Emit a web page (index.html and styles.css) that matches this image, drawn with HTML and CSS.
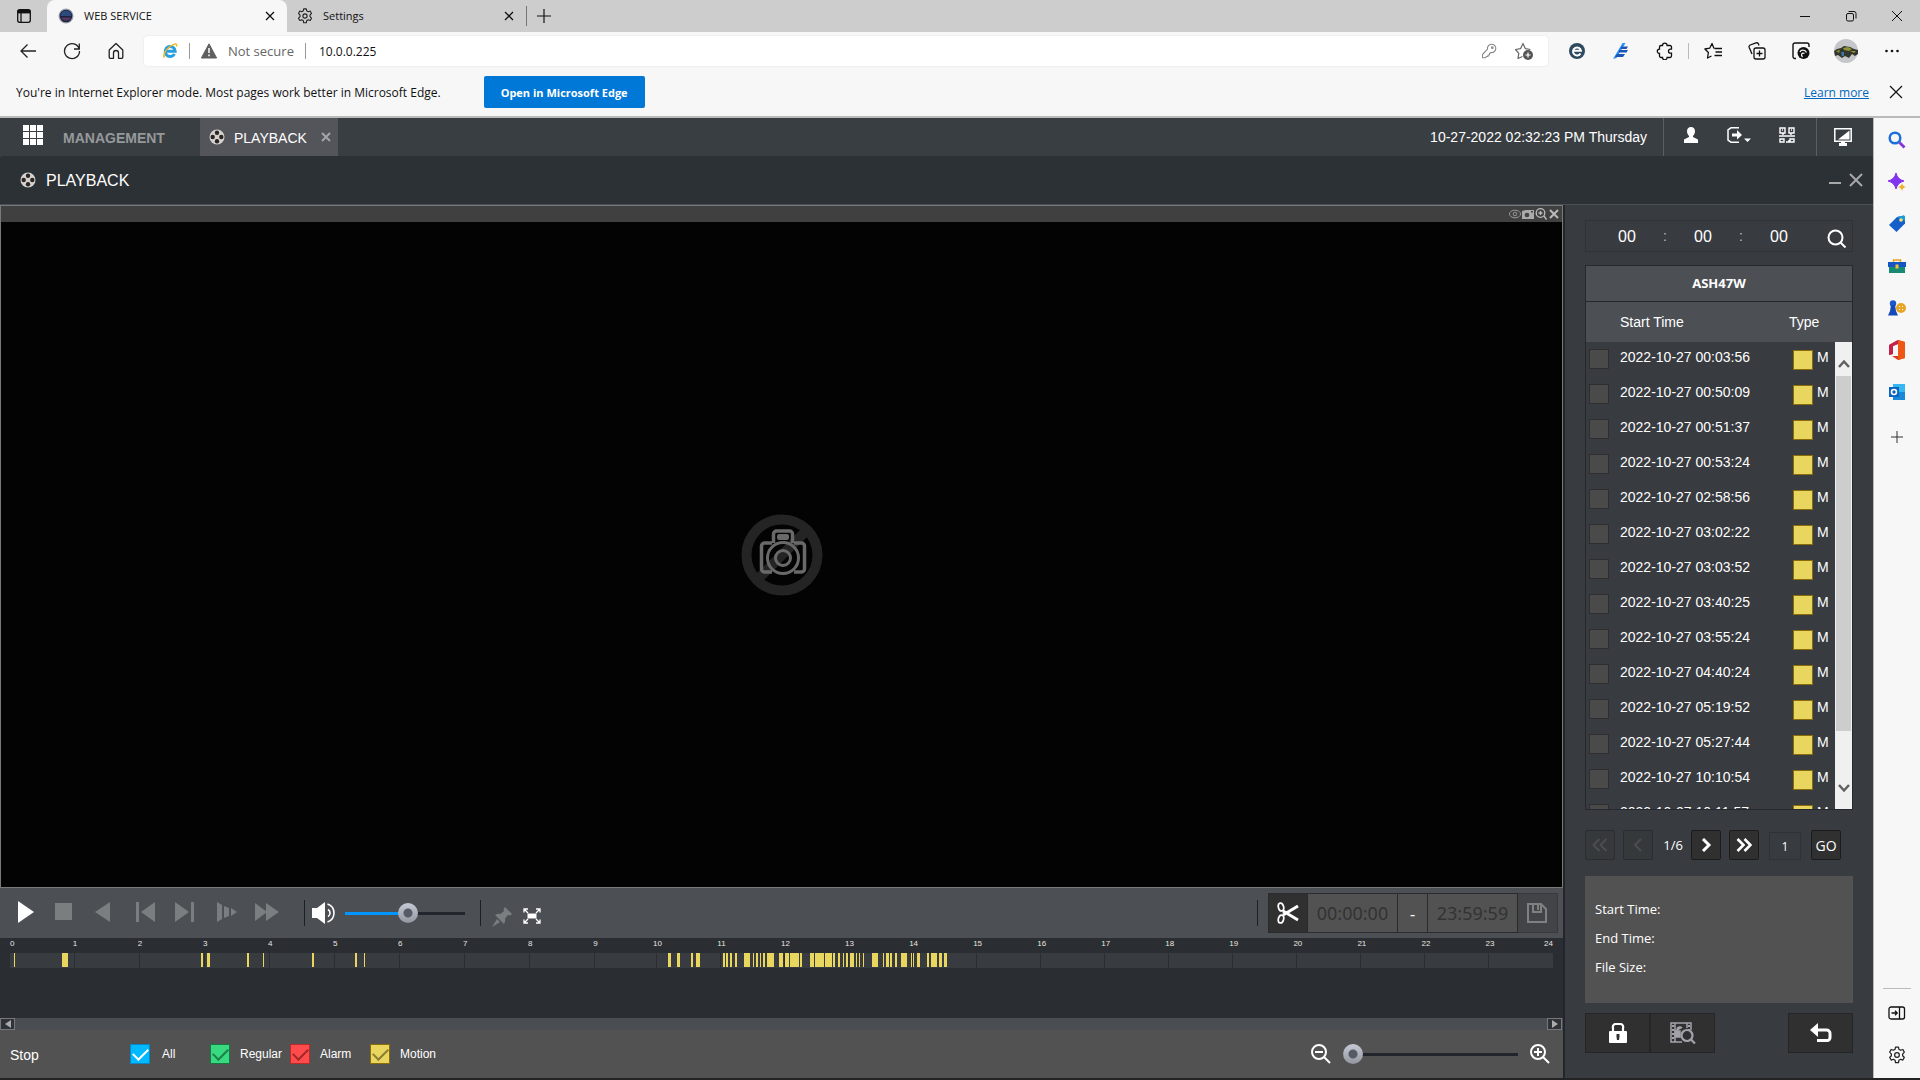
FILE: index.html
```html
<!DOCTYPE html>
<html lang="en">
<head>
<meta charset="utf-8">
<title>WEB SERVICE</title>
<link rel="stylesheet" href="styles.css">
</head>
<body>
<header class="browser">
  <div class="tabstrip">
    <button class="ic tab-actions" aria-label="Tab actions"><svg width="16" height="16" viewBox="0 0 16 16" fill="none" stroke="#111" stroke-width="1.3"><rect x="1.7" y="1.7" width="12.6" height="12.6" rx="2"/><path d="M1.7 3.7h12.6" stroke-width="3.4"/><path d="M5 5v9"/></svg></button>
    <div class="tab tab-active">
      <svg width="16" height="16" viewBox="0 0 16 16"><circle cx="8" cy="8" r="7.5" fill="#9aa0ae"/><circle cx="8" cy="8" r="6.3" fill="#1c2340"/><path d="M2.5 8a5.5 5.5 0 0 1 11 0z" fill="#2c4b7c"/><path d="M3 9.5h10a5.5 5.5 0 0 1-10 0z" fill="#57365f"/></svg>
      <span class="tab-title">WEB SERVICE</span>
      <button class="ic close" aria-label="Close tab"><svg width="10" height="10" viewBox="0 0 10 10" stroke="#111" stroke-width="1.3"><path d="M1 1l8 8M9 1l-8 8"/></svg></button>
    </div>
    <div class="tab">
      <svg width="16" height="16" viewBox="0 0 16 16" fill="none" stroke="#222" stroke-width="1.1"><circle cx="8" cy="8" r="2.1"/><path d="M6.7.9h2.6l.4 2 1.5.9 2-.7 1.3 2.3-1.5 1.8v1.5l1.5 1.5-1.3 2.3-2-.7-1.5.9-.4 2.1H6.7l-.4-2.1-1.5-.9-2 .7-1.3-2.3L3 8.7V7.2L1.5 5.4l1.3-2.3 2 .7 1.5-.9z" stroke-linejoin="round"/></svg>
      <span class="tab-title">Settings</span>
      <button class="ic close" aria-label="Close tab"><svg width="10" height="10" viewBox="0 0 10 10" stroke="#111" stroke-width="1.3"><path d="M1 1l8 8M9 1l-8 8"/></svg></button>
    </div>
    <span class="vline tall"></span>
    <button class="ic newtab" aria-label="New tab"><svg width="16" height="16" viewBox="0 0 16 16" stroke="#111" stroke-width="1.2"><path d="M8 1v14M1 8h14"/></svg></button>
    <div class="winbtns">
      <button class="ic" aria-label="Minimize"><svg width="12" height="12" viewBox="0 0 12 12" stroke="#111"><path d="M1 6.500h10"/></svg></button>
      <button class="ic" aria-label="Restore"><svg width="12" height="12" viewBox="0 0 12 12" fill="none" stroke="#111"><rect x="1.500" y="3.500" width="7" height="7.500" rx="1.500"/><path d="M3.500 1.500h5.500a2 2 0 0 1 2 2v5"/></svg></button>
      <button class="ic" aria-label="Close"><svg width="12" height="12" viewBox="0 0 12 12" stroke="#111"><path d="M1 1l10 10M11 1L1 11"/></svg></button>
    </div>
  </div>

  <div class="toolbar">
    <div class="nav">
      <button class="ic" aria-label="Back"><svg width="18" height="18" viewBox="0 0 18 18" fill="none" stroke="#222" stroke-width="1.300"><path d="M17 9H2M8.500 2.500L2 9l6.500 6.500"/></svg></button>
      <button class="ic" aria-label="Refresh"><svg width="18" height="18" viewBox="0 0 18 18" fill="none" stroke="#222" stroke-width="1.300"><path d="M16.200 7A7.500 7.500 0 1 0 16.500 9M16.300 1.500V7H11"/></svg></button>
      <button class="ic" aria-label="Home"><svg width="18" height="18" viewBox="0 0 18 18" fill="none" stroke="#222" stroke-width="1.300"><path d="M2.200 8L9 1.500 15.800 8v7.300a1 1 0 0 1-1 1h-3.300V11a2.500 2.500 0 0 0-5 0v5.300H3.200a1 1 0 0 1-1-1z" stroke-linejoin="round"/></svg></button>
    </div>
    <div class="address">
      <svg width="16" height="16" viewBox="0 0 16 16" fill="none"><path d="M12.500 11A5 5 0 1 1 13.200 8.300H4.500" stroke="#2a9fe0" stroke-width="3"/><path d="M2.500 14.500C.5 13 3 7 8 3.500s7.500-3 6.500 0" stroke="#f2b91d" stroke-width="1.500"/></svg>
      <span class="vline"></span>
      <svg width="16" height="16" viewBox="0 0 16 16"><path d="M8 .8L15.600 15H.4z" fill="#5f5f5f" stroke="#5f5f5f" stroke-linejoin="round"/><path d="M8 5v5M8 11.500v1.800" stroke="#fff" stroke-width="1.500"/></svg>
      <span class="notsecure">Not secure</span>
      <span class="vline"></span>
      <input class="url" type="text" value="10.0.0.225" aria-label="Address">
      <button class="ic" aria-label="Saved password"><svg width="16" height="16" viewBox="0 0 16 16" fill="none" stroke="#888" stroke-width="1.100"><path d="M6.500 6.200A4.200 4.200 0 1 1 9.800 9.500L8.500 10.500V12H7v1.500H5.500L4.500 14.800H1.500V11.500z" stroke-linejoin="round"/><circle cx="11.300" cy="4.700" r=".8"/></svg></button>
      <button class="ic" aria-label="Add to favorites"><svg width="20" height="20" viewBox="0 0 20 20" fill="none" stroke="#666" stroke-width="1.200"><path d="M8.500 15.500L4 17.500l.8-5.200L1.500 8.500l5-.8L9 2.500l2.400 5.200 5 .8" stroke-linejoin="round"/><circle cx="14" cy="14" r="5" fill="#555" stroke="none"/><path d="M14 11.500v5M11.500 14h5" stroke="#fff"/></svg></button>
    </div>
    <div class="exts">
      <button class="ic" aria-label="Extension e"><svg width="18" height="18" viewBox="0 0 18 18" fill="none"><circle cx="9" cy="9" r="8" fill="#2d4a5e"/><path d="M12.500 11.500A4 4 0 1 1 13 8.800H6" stroke="#fff" stroke-width="2"/></svg></button>
      <button class="ic" aria-label="Extension stripes"><svg width="18" height="18" viewBox="0 0 18 18"><path d="M10.500 1h3L4.500 16l-3.500 1z" fill="#2a8ff0"/><path d="M9.500 4.500H16L14.500 7H8.500zM7.500 8H16l-1.500 2.500H6.500zM5 12h8l-2 3H3z" fill="#1b55b8"/></svg></button>
      <button class="ic" aria-label="Extensions"><svg width="18" height="18" viewBox="0 0 18 18" fill="none" stroke="#111" stroke-width="1.300"><path d="M6.500 3.500a2.300 2.300 0 0 1 4.600 0H14a1.500 1.500 0 0 1 1.500 1.500v2.200h-1a2 2 0 0 0 0 4h1V14a1.500 1.500 0 0 1-1.500 1.500h-2.900a2.300 2.300 0 0 1-4.600 0H5A1.500 1.500 0 0 1 3.500 14v-2.500a2.200 2.200 0 0 1 0-4.400V5A1.500 1.500 0 0 1 5 3.500z"/></svg></button>
      <span class="vline"></span>
      <button class="ic" aria-label="Favorites"><svg width="18" height="18" viewBox="0 0 18 18" fill="none" stroke="#111" stroke-width="1.300"><path d="M10 6.500L8 1.500 5.700 6.200.9 7l3.500 3.500L3.500 16l4-2M10.500 6.500H18M11.500 10H18M10.500 13.500H18" stroke-linejoin="round"/></svg></button>
      <button class="ic" aria-label="Collections"><svg width="18" height="18" viewBox="0 0 18 18" fill="none" stroke="#111" stroke-width="1.300"><rect x="6" y="6" width="11" height="11" rx="2"/><path d="M11.500 8.500v6M8.500 11.500h6M4 12L1.200 5.500a2 2 0 0 1 1-2.500L8 .9a2 2 0 0 1 2.500 1.200L11 3.500"/></svg></button>
      <button class="ic" aria-label="IE mode"><svg width="18" height="18" viewBox="0 0 18 18" fill="none" stroke="#111" stroke-width="1.400"><path d="M4 16.500H3a2 2 0 0 1-2-2V3a2 2 0 0 1 2-2h12a2 2 0 0 1 2 2v2"/><circle cx="11.500" cy="11" r="6" fill="#111" stroke="none"/><path d="M8 10c1-2.500 5-2.500 6.500.5M12.500 11.500c-2.500-1.500-4 1-2 3.500" stroke="#f7f7f7" stroke-width="1.300"/></svg></button>
      <button class="ic wide" aria-label="Profile"><svg width="24" height="24" viewBox="0 0 24 24"><circle cx="12" cy="12" r="12" fill="#c5c6ca"/><path d="M0 12l3-2 4-1 3-2 6 1 4 2 4 1v4l-3 2-3-2-3 4-4-2-3 2-4-3-3 1z" fill="#33372b"/><path d="M9 9l5-1 4 2-3 2-5-1zM16 12l6 0-2 2zM2 12l4-1-1 3z" fill="#8f9236"/><path d="M7 13h3v4H8z" fill="#3c77a8"/></svg></button>
      <button class="ic wide" aria-label="More"><svg width="16" height="16" viewBox="0 0 16 16" fill="#111"><circle cx="2.500" cy="8" r="1.300"/><circle cx="8" cy="8" r="1.300"/><circle cx="13.500" cy="8" r="1.300"/></svg></button>
    </div>
  </div>

  <div class="banner">
    <span>You're in Internet Explorer mode. Most pages work better in Microsoft Edge.</span>
    <button class="open-edge">Open in Microsoft Edge</button>
    <a class="learn" href="#">Learn more</a>
    <button class="ic" aria-label="Dismiss"><svg width="14" height="14" viewBox="0 0 14 14" stroke="#111" stroke-width="1.200"><path d="M1 1l12 12M13 1L1 13"/></svg></button>
  </div>
</header>

<div class="main">
<div class="app">
  <nav class="appnav">
    <svg class="grid-icon" width="20" height="20" viewBox="0 0 20 20" fill="#fff"><path d="M0 0h6v6H0zM7 0h6v6H7zM14 0h6v6h-6zM0 7h6v6H0zM7 7h6v6H7zM14 7h6v6h-6zM0 14h6v6H0zM7 14h6v6H7zM14 14h6v6h-6z"/></svg>
    <a class="management" href="#">MANAGEMENT</a>
    <div class="apptab">
      <svg width="16" height="16" viewBox="0 0 16 16"><circle cx="8" cy="8" r="7.500" fill="#d4d2cf"/><g fill="#2b2420"><circle cx="8" cy="3.700" r="2.200"/><circle cx="8" cy="12.300" r="2.200"/><circle cx="3.700" cy="8" r="2.200"/><circle cx="12.300" cy="8" r="2.200"/></g></svg>
      <a href="#">PLAYBACK</a>
      <button class="ic" aria-label="Close playback"><svg width="10" height="10" viewBox="0 0 10 10" stroke="#a3a4a8" stroke-width="2"><path d="M1 1l8 8M9 1l-8 8"/></svg></button>
    </div>
    <time class="clock">10-27-2022 02:32:23 PM Thursday</time>
    <div class="navicons">
      <button class="ic" aria-label="User"><svg width="16" height="16" viewBox="0 0 16 16" fill="#fff"><path d="M8 0c2.500 0 4 1.800 4 4.300C12 6.500 11 8 10 9v1l5 2.500V16H1v-3.500L6 10V9C5 8 4 6.500 4 4.300 4 1.800 5.500 0 8 0z"/></svg></button>
      <button class="ic" aria-label="Logout"><svg width="24" height="16" viewBox="0 0 24 16" fill="none"><path d="M12 .8H4L1 3v10l3 2.200h8" stroke="#fff" stroke-width="1.500"/><path d="M5 6.500h5V3l5 5-5 4.500v-3H5zM17 11.500h7l-3.500 3.500z" fill="#fff"/></svg></button>
      <button class="ic" aria-label="QR code"><svg width="16" height="16" viewBox="0 0 16 16" fill="none" stroke="#fff" stroke-width="1.400"><path d="M1 1h5v5H1zM10 1h5v5h-5zM0 9h16M1 12h4v3H1zM11 12h4v3h-4zM7 15h3v-2M3 3h1M12 3h1M4 6v2M12 6v2"/></svg></button>
    </div>
    <button class="ic screen" aria-label="Display"><svg width="18" height="18" viewBox="0 0 18 18"><path d="M.8.8h16.400v12.400H.8z" fill="none" stroke="#fff" stroke-width="1.500"/><path d="M15.500 2.500v9H4zM7 13h4v2h2v3H5v-3h2z" fill="#fff"/></svg></button>
  </nav>

  <div class="titlebar">
    <svg width="16" height="16" viewBox="0 0 16 16"><circle cx="8" cy="8" r="7.500" fill="#d4d2cf"/><g fill="#2b2420"><circle cx="8" cy="3.700" r="2.200"/><circle cx="8" cy="12.300" r="2.200"/><circle cx="3.700" cy="8" r="2.200"/><circle cx="12.300" cy="8" r="2.200"/></g></svg>
    <h1>PLAYBACK</h1>
    <button class="ic" aria-label="Minimize panel"><svg width="12" height="12" viewBox="0 0 12 12" stroke="#a6a8aa" stroke-width="2"><path d="M0 9h12"/></svg></button>
    <button class="ic" aria-label="Close panel"><svg width="14" height="14" viewBox="0 0 14 14" stroke="#a6a8aa" stroke-width="2"><path d="M1 1l12 12M13 1L1 13"/></svg></button>
  </div>

  <div class="workspace">
    <section class="player">
      <div class="video">
        <div class="videobar">
          <button class="ic" aria-label="Fish eye"><svg width="12" height="12" viewBox="0 0 12 12" fill="none" stroke="#999"><ellipse cx="6" cy="6" rx="5.500" ry="3.800"/><circle cx="6" cy="6" r="1.800"/></svg></button>
          <button class="ic" aria-label="Snapshot"><svg width="12" height="12" viewBox="0 0 12 12"><path d="M0 3l4-1h8v9H0z" fill="#aaa"/><circle cx="5" cy="7" r="2.300" fill="#444"/><path d="M9 3h2v1.500H9z" fill="#444"/></svg></button>
          <button class="ic" aria-label="Digital zoom"><svg width="12" height="12" viewBox="0 0 12 12" fill="none" stroke="#bbb" stroke-width="1.300"><circle cx="5.500" cy="5" r="4.300"/><path d="M5.500 3v4M3.500 5h4M9 8l2.500 3.500"/></svg></button>
          <button class="ic" aria-label="Close video"><svg width="12" height="12" viewBox="0 0 12 12" stroke="#bbb" stroke-width="2"><path d="M2 2l8 8M10 2l-8 8"/></svg></button>
        </div>
        <div class="screen-area">
          <svg width="82" height="82" viewBox="0 0 82 82" fill="none"><circle cx="41" cy="41" r="35.500" stroke="#242424" stroke-width="10"/><path d="M17 65L65 17" stroke="#242424" stroke-width="10"/><g stroke="#696969" stroke-width="3"><path d="M31 29h-7.500a3 3 0 0 0-3 3v23a3 3 0 0 0 3 3h7.500M53 58h7.500a3 3 0 0 0 3-3V32a3 3 0 0 0-3-3H53M32.500 29V20a3 3 0 0 1 3-3h13a3 3 0 0 1 3 3v9" stroke-width="3.500"/><rect x="36" y="20" width="12" height="6" rx="2" fill="#696969" stroke="none"/><circle cx="42" cy="44" r="15.500"/><circle cx="42" cy="44" r="7.500"/></g></svg>
        </div>
      </div>

      <div class="controls">
        <button class="ic" aria-label="Play"><svg width="22" height="22" viewBox="0 0 22 22" fill="#fff"><path d="M3 0l16 11L3 22z"/></svg></button>
        <button class="ic" aria-label="Stop"><svg width="22" height="22" viewBox="0 0 22 22" fill="#7b7e81"><path d="M0 2h17v17H0z"/></svg></button>
        <button class="ic" aria-label="Play backward"><svg width="22" height="22" viewBox="0 0 22 22" fill="#7b7e81"><path d="M15 1v20L0 11z"/></svg></button>
        <button class="ic" aria-label="Previous frame"><svg width="22" height="22" viewBox="0 0 22 22" fill="#7b7e81"><path d="M1 1h3v20H1zM20 1v20L6 11z"/></svg></button>
        <button class="ic" aria-label="Next frame"><svg width="22" height="22" viewBox="0 0 22 22" fill="#7b7e81"><path d="M16 1h3v20h-3zM0 1v20l14-10z"/></svg></button>
        <button class="ic" aria-label="Slow"><svg width="22" height="22" viewBox="0 0 22 22" fill="#7b7e81"><path d="M2 1l5 3v14l-5 3zM9 5l5 2v8l-5 2zM16 7l6 4-6 4z"/></svg></button>
        <button class="ic" aria-label="Fast"><svg width="24" height="22" viewBox="0 0 24 22" fill="#7b7e81"><path d="M0 2l12 9-12 9zM11 2l13 9-13 9z"/></svg></button>
        <span class="sep first-sep"></span>
        <button class="ic" aria-label="Volume"><svg width="24" height="22" viewBox="0 0 24 22" fill="none"><path d="M0 6h5l8-6v22l-8-6H0z" fill="#fff"/><path d="M16 7.500a4 4 0 0 1 0 7M15.500 2a9.500 9.500 0 0 1 0 18" stroke="#fff" stroke-width="1.600"/></svg></button>
        <input class="slider volume" type="range" min="0" max="100" value="53" aria-label="Volume level">
        <span class="sep"></span>
        <button class="ic pin" aria-label="Pin"><svg width="20" height="20" viewBox="0 0 20 20" fill="#7b7e81"><path d="M13 0l7 7-2 1.500-2-.5-3 3.500c.5 2 0 4-1 5.500L3 8c2-1 4-1.500 5.500-1L12 4l-.5-2zM5 12l3 3-8 5z"/></svg></button>
        <button class="ic pin" aria-label="Full screen"><svg width="18" height="16" viewBox="0 0 18 16" fill="none" stroke="#fff" stroke-width="1.300"><path d="M4.500 5.500h9v5h-9z" fill="#fff" stroke="none"/><path d="M1 4.500V1h4M13 1h4v3.500M17 11.500V15h-4M5 15H1v-3.500M1 1l4 4M17 1l-4 4M17 15l-4-4M1 15l4-4"/></svg></button>
        <span class="sep clipsep"></span>
        <div class="clip">
          <button class="clip-btn dark" aria-label="Cut"><svg width="22" height="22" viewBox="0 0 22 22" fill="none" stroke="#fff"><ellipse cx="4" cy="5" rx="2.600" ry="4" stroke-width="1.700" transform="rotate(-15 4 5)"/><ellipse cx="4" cy="17" rx="2.600" ry="4" stroke-width="1.700" transform="rotate(15 4 17)"/><path d="M6 9l15 9M6 13l15-9" stroke-width="3"/></svg></button>
          <input type="text" value="00:00:00" aria-label="Clip start" disabled>
          <span class="dash">-</span>
          <input type="text" value="23:59:59" aria-label="Clip end" disabled>
          <button class="clip-btn save" aria-label="Save clip"><svg width="20" height="20" viewBox="0 0 20 20" fill="none" stroke="#808080" stroke-width="2"><path d="M1 1h13l5 5v13H1z"/><path d="M6 1v8h8V1M11 2v5"/></svg></button>
        </div>
      </div>

      <div class="timeline">
        <ol class="hours">
          <li class="first"><span>0</span></li><li><span>1</span></li><li><span>2</span></li><li><span>3</span></li><li><span>4</span></li><li><span>5</span></li><li><span>6</span></li><li><span>7</span></li><li><span>8</span></li><li><span>9</span></li><li><span>10</span></li><li><span>11</span></li><li><span>12</span></li><li><span>13</span></li><li><span>14</span></li><li><span>15</span></li><li><span>16</span></li><li><span>17</span></li><li><span>18</span></li><li><span>19</span></li><li><span>20</span></li><li><span>21</span></li><li><span>22</span></li><li class="last"><span>23</span><span>24</span></li>
        </ol>
        <svg class="track" viewBox="0 0 1543 15" preserveAspectRatio="none" shape-rendering="crispEdges">
          <path fill="#383b40" d="M0 0h1543v15H0z"/>
          <path stroke="#2a2d31" d="M64.500 0v15M129.500 0v15M194.500 0v15M259.500 0v15M324.500 0v15M389.500 0v15M454.500 0v15M519.500 0v15M584.500 0v15M646.500 0v15M710.500 0v15M774.500 0v15M838.500 0v15M902.500 0v15M966.500 0v15M1030.500 0v15M1094.500 0v15M1158.500 0v15M1222.500 0v15M1286.500 0v15M1350.500 0v15M1414.500 0v15M1478.500 0v15"/>
          <path fill="#e9d65f" d="M4 0h1v14h-1zM52 0h6v14h-6zM191 0h2v14h-2zM197 0h3v14h-3zM237 0h2v14h-2zM253 0h1v14h-1zM302 0h2v14h-2zM345 0h2v14h-2zM354 0h1v14h-1zM658 0h3v14h-3zM667 0h3v14h-3zM681 0h2v14h-2zM686 0h4v14h-4zM713 0h2v14h-2zM716 0h2v14h-2zM720 0h2v14h-2zM725 0h2v14h-2zM734 0h6v14h-6zM743 0h1v14h-1zM746 0h2v14h-2zM750 0h1v14h-1zM753 0h2v14h-2zM757 0h7v14h-7zM769 0h4v14h-4zM775 0h4v14h-4zM780 0h9v14h-9zM790 0h2v14h-2zM800 0h4v14h-4zM805 0h9v14h-9zM815 0h7v14h-7zM823 0h2v14h-2zM828 0h2v14h-2zM833 0h1v14h-1zM836 0h2v14h-2zM840 0h4v14h-4zM846 0h1v14h-1zM849 0h1v14h-1zM853 0h1v14h-1zM862 0h6v14h-6zM873 0h1v14h-1zM876 0h3v14h-3zM880 0h2v14h-2zM885 0h2v14h-2zM891 0h6v14h-6zM901 0h1v14h-1zM903 0h1v14h-1zM907 0h3v14h-3zM917 0h2v14h-2zM921 0h6v14h-6zM929 0h3v14h-3zM934 0h3v14h-3z"/>
        </svg>
      </div>
      <div class="hscroll">
        <button aria-label="Scroll left"><svg width="6" height="8" viewBox="0 0 6 8" fill="#aaa"><path d="M6 0v8L0 4z"/></svg></button>
        <button aria-label="Scroll right"><svg width="6" height="8" viewBox="0 0 6 8" fill="#aaa"><path d="M0 0v8l6-4z"/></svg></button>
      </div>

      <div class="filters">
        <span class="state">Stop</span>
        <label><input class="chk all" type="checkbox" checked><span class="all-text">All</span></label>
        <label><input class="chk regular" type="checkbox" checked><span>Regular</span></label>
        <label><input class="chk alarm" type="checkbox" checked><span>Alarm</span></label>
        <label><input class="chk motion" type="checkbox" checked><span>Motion</span></label>
        <div class="zoomer">
          <button class="ic" aria-label="Zoom out"><svg width="20" height="20" viewBox="0 0 20 20" fill="none" stroke="#fff" stroke-width="2"><circle cx="8" cy="8" r="7"/><path d="M4 8h8M13 13l6 6"/></svg></button>
          <input class="slider zoom" type="range" min="0" max="100" value="0" aria-label="Timeline zoom">
          <button class="ic" aria-label="Zoom in"><svg width="20" height="20" viewBox="0 0 20 20" fill="none" stroke="#fff" stroke-width="2"><circle cx="8" cy="8" r="7"/><path d="M4 8h8M8 4v8M13 13l6 6"/></svg></button>
        </div>
      </div>
    </section>

    <aside class="files">
      <div class="timesearch">
        <input type="text" value="00" aria-label="Hour"><span>:</span><input type="text" value="00" aria-label="Minute"><span>:</span><input type="text" value="00" aria-label="Second">
        <button class="ic" aria-label="Search"><svg width="20" height="20" viewBox="0 0 20 20" fill="none" stroke="#fff" stroke-width="2"><circle cx="8.500" cy="8.500" r="7"/><path d="M13.500 13.500l5 5"/></svg></button>
      </div>
      <div class="list">
        <h2>ASH47W</h2>
        <table>
          <thead><tr><th></th><th>Start Time</th><th>Type</th></tr></thead>
          <tbody>
            <tr><td><input type="checkbox" aria-label="Select 00:03:56"></td><td>2022-10-27 00:03:56</td><td><i></i>M</td></tr>
            <tr><td><input type="checkbox" aria-label="Select 00:50:09"></td><td>2022-10-27 00:50:09</td><td><i></i>M</td></tr>
            <tr><td><input type="checkbox" aria-label="Select 00:51:37"></td><td>2022-10-27 00:51:37</td><td><i></i>M</td></tr>
            <tr><td><input type="checkbox" aria-label="Select 00:53:24"></td><td>2022-10-27 00:53:24</td><td><i></i>M</td></tr>
            <tr><td><input type="checkbox" aria-label="Select 02:58:56"></td><td>2022-10-27 02:58:56</td><td><i></i>M</td></tr>
            <tr><td><input type="checkbox" aria-label="Select 03:02:22"></td><td>2022-10-27 03:02:22</td><td><i></i>M</td></tr>
            <tr><td><input type="checkbox" aria-label="Select 03:03:52"></td><td>2022-10-27 03:03:52</td><td><i></i>M</td></tr>
            <tr><td><input type="checkbox" aria-label="Select 03:40:25"></td><td>2022-10-27 03:40:25</td><td><i></i>M</td></tr>
            <tr><td><input type="checkbox" aria-label="Select 03:55:24"></td><td>2022-10-27 03:55:24</td><td><i></i>M</td></tr>
            <tr><td><input type="checkbox" aria-label="Select 04:40:24"></td><td>2022-10-27 04:40:24</td><td><i></i>M</td></tr>
            <tr><td><input type="checkbox" aria-label="Select 05:19:52"></td><td>2022-10-27 05:19:52</td><td><i></i>M</td></tr>
            <tr><td><input type="checkbox" aria-label="Select 05:27:44"></td><td>2022-10-27 05:27:44</td><td><i></i>M</td></tr>
            <tr><td><input type="checkbox" aria-label="Select 10:10:54"></td><td>2022-10-27 10:10:54</td><td><i></i>M</td></tr>
            <tr><td><input type="checkbox" aria-label="Select 10:11:57"></td><td>2022-10-27 10:11:57</td><td><i></i>M</td></tr>
          </tbody>
        </table>
        <div class="vscroll">
          <svg width="12" height="34" viewBox="0 0 12 34" fill="none" stroke="#606060" stroke-width="2.500"><path d="M1 25l5-5.500 5 5.500"/></svg>
          <div class="vtrack"><div class="vthumb"></div></div>
          <svg width="12" height="34" viewBox="0 0 12 34" fill="none" stroke="#606060" stroke-width="2.500"><path d="M1 10l5 5.500 5-5.500"/></svg>
        </div>
      </div>
      <div class="pager">
        <button disabled aria-label="First page"><svg width="16" height="14" viewBox="0 0 16 14" fill="none" stroke="#4b4d50" stroke-width="2"><path d="M7.500 1L1.500 7l6 6M14.500 1l-6 6 6 6"/></svg></button>
        <button disabled aria-label="Previous page"><svg width="16" height="14" viewBox="0 0 16 14" fill="none" stroke="#4b4d50" stroke-width="2"><path d="M11 1L5 7l6 6"/></svg></button>
        <span class="pages">1/6</span>
        <button aria-label="Next page"><svg width="16" height="14" viewBox="0 0 16 14" fill="none" stroke="#fff" stroke-width="3"><path d="M5 1l6 6-6 6"/></svg></button>
        <button aria-label="Last page"><svg width="16" height="14" viewBox="0 0 16 14" fill="none" stroke="#fff" stroke-width="2.600"><path d="M1.500 1l6 6-6 6M8.500 1l6 6-6 6"/></svg></button>
        <input type="text" value="1" aria-label="Page">
        <button class="go">GO</button>
      </div>
      <dl class="info"><dt>Start Time:</dt><dt>End Time:</dt><dt>File Size:</dt></dl>
      <div class="actions">
        <button aria-label="Lock"><svg width="18" height="20" viewBox="0 0 18 20" fill="none"><path d="M4 9V5a3 3 0 0 1 3-4h4a3 3 0 0 1 3 4v4" stroke="#fff" stroke-width="2.200"/><rect y="8" width="18" height="12" rx="1" fill="#fff"/><path d="M7.500 11h3v3l-.5 3H8l-.5-3z" fill="#303030"/></svg></button>
        <button aria-label="Locked files"><svg width="26" height="22" viewBox="0 0 26 22" fill="none" stroke="#a2a2aa" stroke-width="1.500"><path d="M12 20H1V1h20v7M5 1v19M17 1v5" /><path d="M3 3v16M19 3v5" stroke-width="2" stroke-dasharray="2 2"/><path d="M5 15V9h5v6zM7 9V7a3 3 0 0 1 5-1" fill="#a2a2aa"/><circle cx="17" cy="13.500" r="5.500" fill="#303030" stroke-width="2.200"/><path d="M21 17.500l4 4" stroke-width="2.200"/></svg></button>
        <button class="back" aria-label="Return"><svg width="22" height="20" viewBox="0 0 22 20" fill="none"><path d="M6 7h10a3.500 3.500 0 0 1 4 4v3a3 3 0 0 1-3 3.500H7" stroke="#fff" stroke-width="3"/><path d="M8 0v14L0 7z" fill="#fff"/></svg></button>
      </div>
    </aside>
  </div>
</div>

<nav class="edgebar">
  <button class="ic" aria-label="Search"><svg width="18" height="18" viewBox="0 0 18 18" fill="none"><circle cx="7" cy="7" r="5.300" stroke="#1a6fdd" stroke-width="2.500"/><path d="M11.500 11.500l5 5" stroke="#8437d6" stroke-width="2.800"/></svg></button>
  <button class="ic" aria-label="Discover"><svg width="18" height="18" viewBox="0 0 18 18"><path d="M8 0q1.500 6.500 8 8-6.500 1.500-8 8-1.500-6.500-8-8 6.500-1.500 8-8z" fill="#8433ee" stroke="#8433ee"/><path d="M14 10q.6 3.400 4 4-3.400.6-4 4-.6-3.400-4-4 3.400-.6 4-4z" fill="#f0b11e"/></svg></button>
  <button class="ic" aria-label="Shopping"><svg width="18" height="18" viewBox="0 0 18 18"><path d="M9 2l7-1.500L17 2v6.500L8.500 17 1 10z" fill="#145fc9"/><path d="M9 2l7-1.500L17 2v4z" fill="#1b9ad8"/><circle cx="13" cy="5" r="1.800" fill="#ffe26a"/></svg></button>
  <button class="ic" aria-label="Tools"><svg width="18" height="18" viewBox="0 0 18 18"><path d="M5.500 5V3h7v2" fill="none" stroke="#e6a21c" stroke-width="1.500"/><path d="M1 8h16v8H1z" fill="#168a72"/><path d="M0 5h18v5H0z" fill="#1556c4"/><path d="M7.500 7.500h3v4h-3z" fill="#f6c12f"/></svg></button>
  <button class="ic" aria-label="Games"><svg width="18" height="18" viewBox="0 0 18 18"><circle cx="5" cy="4.500" r="3.200" fill="#1b58c8"/><path d="M3 6h4l1 6 2 4.500H0L2 12z" fill="#1648b8"/><circle cx="13" cy="9" r="5" fill="#e8a523"/><path d="M11 7h1v1h-1zM14 7h1v1h-1zM11 10h1v1h-1zM14 10h1v1h-1z" fill="#fff"/></svg></button>
  <button class="ic" aria-label="Office"><svg width="18" height="20" viewBox="0 0 18 20"><path d="M10 0l7 2v16l-7 2-6-4h6V4L5 6v8l-4 1V5z" fill="#d83b20"/><path d="M10 0l7 2v16l-7 2z" fill="#ee5714"/><path d="M1 5l9-5v4L5 6v8l-4 1z" fill="#c3224c"/></svg></button>
  <button class="ic" aria-label="Outlook"><svg width="18" height="18" viewBox="0 0 18 18" fill="none"><path d="M5 1h12v14H5z" fill="#35b8f1"/><path d="M5 9h12v8H5z" fill="#1789d8"/><path d="M1 4h10v10H1z" fill="#0a64bd"/><circle cx="6" cy="9" r="2.500" stroke="#fff" stroke-width="1.600"/></svg></button>
  <button class="ic" aria-label="Add"><svg width="14" height="14" viewBox="0 0 14 14" stroke="#333"><path d="M7 1v12M1 7h12"/></svg></button>
  <hr>
  <button class="ic" aria-label="Hide sidebar"><svg width="18" height="14" viewBox="0 0 18 14" fill="none" stroke="#111" stroke-width="1.300"><rect x="1" y="1" width="15.500" height="12" rx="2"/><path d="M11.500 1v12M3.500 7H9M7 4.800L9.200 7 7 9.200"/></svg></button>
  <button class="ic" aria-label="Sidebar settings"><svg width="18" height="18" viewBox="0 0 16 16" fill="none" stroke="#222" stroke-width="1.100"><circle cx="8" cy="8" r="2.100"/><path d="M6.700.9h2.600l.4 2 1.500.9 2-.7 1.300 2.300-1.500 1.800v1.500l1.500 1.500-1.300 2.300-2-.7-1.500.9-.4 2.100H6.700l-.4-2.100-1.500-.9-2 .7-1.300-2.300L3 8.700V7.200L1.500 5.400l1.300-2.300 2 .7 1.500-.9z" stroke-linejoin="round"/></svg></button>
</nav>
</div>
<div class="taskedge"></div>
</body>
</html>
```
FILE: styles.css
```css
* { box-sizing: border-box; }
body {
  margin: 0;
  height: 100vh;
  display: flex;
  flex-direction: column;
  overflow: hidden;
  font-family: "Liberation Sans", Arial, sans-serif;
  font-size: 14px;
  color: #fff;
  background: #f7f7f7;
}
button, input { font: inherit; color: inherit; margin: 0; }
a { color: inherit; text-decoration: none; }
svg { display: block; flex: none; }
.ic {
  display: flex;
  align-items: center;
  justify-content: center;
  flex: none;
  padding: 0;
  border: 0;
  background: none;
}

/* browser chrome */
.browser { color: #111; font-family: "Open Sans", "Noto Sans", sans-serif; font-size: 12px; }
.tabstrip { display: flex; align-items: center; height: 32px; background: #cdcdcd; }
.tab-actions { width: 47px; }
.tab { display: flex; align-items: center; gap: 10px; width: 239px; height: 32px; padding: 0 12px 0 10px; }
.tab-active { width: 240px; padding-left: 11px; background: #f7f7f7; border-radius: 8px 8px 0 0; }
.tab-title { flex: 1; padding-bottom: 2px; font-size: 11px; }
.vline { width: 1px; height: 16px; background: #999; flex: none; }
.vline.tall { height: 20px; background: #777; }
.newtab { width: 34px; }
.winbtns { display: flex; margin-left: auto; }
.winbtns .ic { width: 46px; height: 32px; }
.toolbar { display: flex; align-items: center; height: 38px; }
.nav { display: flex; width: 144px; padding-left: 6px; }
.nav .ic { width: 44px; height: 30px; }
.address {
  display: flex;
  align-items: center;
  flex: 1;
  gap: 11px;
  height: 30px;
  padding: 0 12px 0 18px;
  background: #fff;
  border-radius: 4px;
  box-shadow: 0 0 2px #ddd;
}
.address .ic { width: 24px; }
.notsecure { color: #666; font-size: 13px; }
.url { flex: 1; min-width: 0; padding: 0 0 0 2px; border: 0; background: none; font-size: 12px; }
.exts { display: flex; align-items: center; padding: 0 5px 0 7px; }
.exts .ic { width: 44px; height: 30px; }
.exts .wide { width: 46px; }
.exts .vline { margin: 0 2px 0 1px; background: #bbb; }
.banner {
  display: flex;
  align-items: center;
  height: 48px;
  padding: 0 17px 2px 16px;
  border-bottom: 2px solid #b9bbbb;
}
.open-edge {
  width: 161px;
  height: 32px;
  margin-left: 43px;
  padding: 0;
  border: 0;
  border-radius: 2px;
  background: #0078d7;
  color: #fff;
  font-size: 11px;
  font-weight: 700;
}
.learn { margin-left: auto; margin-right: 20px; color: #0067c0; text-decoration: underline; }

/* application */
.main { display: flex; flex: 1; min-height: 0; }
.app { display: flex; flex-direction: column; flex: 1; min-width: 0; background: #383b40; }
.appnav { display: flex; align-items: center; height: 38px; background: #393e42; flex: none; }
.grid-icon { margin: 0 20px 4px 23px; }
.management { width: 137px; padding-top: 2px; color: #96999b; font-weight: bold; }
.apptab {
  display: flex;
  align-items: center;
  gap: 9px;
  width: 138px;
  height: 38px;
  padding: 0 7px 0 9px;
  background: #54555a;
}
.apptab a { padding-top: 2px; }
.apptab .ic { margin-left: auto; }
.clock { margin-left: auto; padding-right: 16px; }
.navicons {
  display: flex;
  align-items: center;
  justify-content: space-between;
  width: 154px;
  height: 38px;
  padding: 0 21px 4px 19px;
  border: solid #5b5f63;
  border-width: 0 1px;
}
.screen { width: 56px; height: 38px; padding-right: 4px; }
.titlebar {
  display: flex;
  align-items: center;
  gap: 10px;
  height: 49px;
  padding: 0 10px 0 20px;
  background: #2c3135;
  border-bottom: 1px solid #4b4f56;
  border-radius: 4px 4px 0 0;
  flex: none;
}
.titlebar h1 { flex: 1; margin: 0; padding-top: 2px; font-size: 16px; font-weight: normal; }
.titlebar .ic + .ic { margin-left: -2px; }
.workspace { display: flex; flex: 1; min-height: 0; }
.player { display: flex; flex-direction: column; flex: 1; min-width: 0; border-right: 2px solid #22252b; }
.video { display: flex; flex-direction: column; flex: 1; border: 1px solid #797979; background: #030303; }
.videobar { display: flex; align-items: center; justify-content: flex-end; gap: 1px; height: 16px; padding-right: 2px; background: #404040; }
.screen-area { display: flex; align-items: center; justify-content: center; flex: 1; }

.controls { display: flex; align-items: center; height: 50px; padding: 0 5px 0 15px; background: #4c4f54; }
.controls > .ic { margin-right: 18px; padding-bottom: 2px; }
.sep { width: 1px; height: 26px; background: #1d1f23; flex: none; }
.controls .sep { margin-right: 7px; }
.controls .first-sep { margin-left: 7px; }
.controls > .sep + .ic { margin-right: 9px; padding: 0; }
.controls > .volume { margin-right: 15px; }
.controls > .pin, .controls > .sep + .pin { margin: 8px 11px 0 0; }
.controls > .sep + .pin { margin-left: 4px; }
.controls .clipsep { margin-left: auto; margin-right: 10px; }
.slider { appearance: none; height: 20px; padding: 0; background: none; outline: none; }
.volume { width: 120px; }
.zoom { width: 175px; }
.slider::-webkit-slider-runnable-track { height: 3px; background: #22252b; }
.volume::-webkit-slider-runnable-track { background: linear-gradient(90deg, #0096ff 50%, #22252b 50%); }
.slider::-webkit-slider-thumb {
  appearance: none;
  width: 20px;
  height: 20px;
  margin-top: -9px;
  border-radius: 50%;
  background: radial-gradient(circle, #555a66 0 4px, transparent 5px), linear-gradient(#c6cad4, #92969f);
}
.clip { display: flex; height: 40px; font-family: "Noto Sans", sans-serif; }
.clip > * { height: 40px; padding: 0; border: 1px solid #2a2b2d; border-radius: 0; background: #525252; text-align: center; }
.clip > * + * { border-left-width: 0; }
.clip input { width: 90px; font-size: 18px; color: #333; }
.clip .dash { width: 30px; line-height: 40px; font-size: 16px; }
.clip-btn { display: flex; align-items: center; justify-content: center; width: 40px; }
.clip .dark { background: #303030; }
.clip .save { background: #424447; border-color: #37393c; padding-right: 2px; }

.timeline { height: 80px; padding: 0 10px; background: #2a2d31; }
.hours {
  display: grid;
  grid-template-columns: 64fr repeat(8, 65fr) 62fr repeat(14, 64fr);
  height: 15px;
  margin: 0;
  padding: 2px 0 0;
  list-style: none;
  font-size: 8px;
  line-height: 8px;
  color: #e6e6e6;
}
.hours span { display: block; width: 18px; margin-left: -8px; text-align: center; }
.hours .first span { margin-left: 0; text-align: left; }
.hours .last { display: flex; justify-content: space-between; }
.hours .last span + span { text-align: right; }
.track { width: 100%; height: 15px; }
.hscroll { display: flex; justify-content: space-between; height: 12px; padding-right: 1px; background: #4a4d52; }
.hscroll button { display: flex; align-items: center; justify-content: center; width: 15px; height: 12px; padding: 0; border: 1px solid #75787c; background: #2f3236; }

.filters { display: flex; align-items: center; height: 48px; padding: 0 13px 0 10px; background: #525252; font-size: 12px; }
.state { width: 120px; padding-top: 2px; font-size: 14px; }
.filters label { display: flex; align-items: center; gap: 10px; width: 80px; }
.all-text { padding-left: 2px; }
.chk { appearance: none; width: 20px; height: 20px; border: 1px solid; flex: none; display: grid; place-items: center; }
.chk::after { content: ""; width: 13px; height: 7px; margin-top: -4px; border: solid; border-width: 0 0 2px 2px; transform: rotate(-45deg); }
.all { background: #00b9ff; border-color: #0a86c4; color: #fff; }
.regular { background: #38d97f; border-color: #157a41; color: #1d8049; }
.alarm { background: #ff4b4b; border-color: #b82c2c; color: #a02828; }
.motion { background: #e9d65f; border-color: #8a6d0a; color: #8b7c32; }
.all::after { border-color: #fff; }
.regular::after { border-color: #1d8049; }
.alarm::after { border-color: #a02828; }
.motion::after { border-color: #8b7c32; }
.zoomer { display: flex; align-items: center; gap: 12px; margin-left: auto; }

/* recorded files */
.files { display: flex; flex-direction: column; width: 308px; padding: 15px 20px 25px; flex: none; }
.timesearch { display: flex; align-items: center; height: 32px; padding: 0 5px 0 13px; border: 1px solid #303235; margin-bottom: 13px; flex: none; font-size: 16px; }
.timesearch input { width: 56px; padding: 1px 0 0; border: 0; background: none; text-align: center; }
.timesearch span { width: 20px; text-align: center; color: #bbb; font-size: 14px; }
.timesearch .ic { margin: 5px 0 0 auto; }
.list { position: relative; display: flex; flex-direction: column; flex: 1; min-height: 0; border: 1px solid #25282c; }
.list h2 { height: 36px; margin: 0; border-bottom: 1px solid #25282c; background: #4c4f54; text-align: center; line-height: 35px; font-family: "Open Sans", sans-serif; font-size: 13px; flex: none; }
.list table { display: flex; flex-direction: column; flex: 1; min-height: 0; overflow: hidden; }
.list thead { display: block; background: #4c4f54; flex: none; }
.list tbody { display: block; flex: 1; min-height: 0; overflow: hidden; }
.list tr { display: grid; grid-template-columns: 34px 1fr 63px; height: 35px; }
.list thead tr { height: 40px; line-height: 40px; }
.list th { padding: 0; font-weight: normal; text-align: left; }
.list td { padding: 0; line-height: 31px; }
.list td input { appearance: none; display: block; width: 20px; height: 20px; margin: 7px 0 0 3px; background: #4a4a4a; border: 1px solid #2e2e30; }
.list td:last-child { display: flex; gap: 4px; padding-left: 4px; }
.list i { width: 20px; height: 20px; margin-top: 8px; background: #e9d65f; border: 1px solid #8a6d0a; }
.vscroll { position: absolute; top: 76px; right: 0; bottom: 0; width: 17px; display: flex; flex-direction: column; align-items: center; background: #f0f0f0; }
.vtrack { flex: 1; width: 15px; }
.vthumb { height: 89%; background: #cdcdcd; }

.pager { display: flex; align-items: center; height: 30px; margin: 20px 0 16px; gap: 8px; flex: none; font-family: "Open Sans", "Noto Sans", sans-serif; }
.pager button { display: flex; align-items: center; justify-content: center; width: 30px; height: 30px; padding: 0; border: 1px solid #1a1b1d; border-radius: 2px; background: #303030; }
.pager button:disabled { background: #36393c; border-color: #2b2d30; }
.pages { width: 22px; text-align: right; font-size: 13px; white-space: nowrap; }
.pager input { width: 32px; height: 28px; margin: 2px 2px 0; padding: 0; border: 1px solid #303235; background: none; text-align: center; font-size: 12px; }
.info { height: 127px; margin: 0 0 10px; padding: 19px 10px; background: #525252; font-family: "Open Sans", "Noto Sans", sans-serif; font-size: 13px; line-height: 29px; flex: none; }
.actions { display: flex; flex: none; }
.actions button { display: flex; align-items: center; justify-content: center; width: 65px; height: 40px; padding: 0; border: 1px solid #242527; background: #303030; }
.actions .back { margin-left: auto; }

/* browser side bar */
.edgebar { display: flex; flex-direction: column; align-items: center; width: 47px; padding-top: 1px; border-left: 1px solid #b9bbbb; flex: none; }
.edgebar .ic { width: 46px; height: 42px; }
.edgebar .ic:nth-of-type(8) { height: 48px; }
.edgebar hr { width: 28px; margin: auto 0 3px; border: 0; border-top: 1px solid #bbb; }
.edgebar .ic:last-child { margin-bottom: 2px; }
.taskedge { height: 2px; background: #232323; flex: none; }
```
